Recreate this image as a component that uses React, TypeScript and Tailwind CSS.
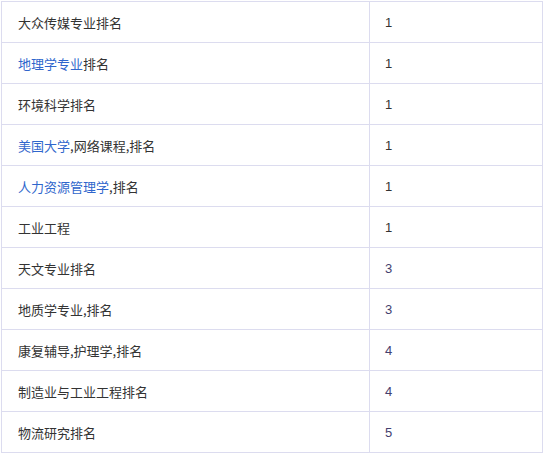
import React from "react";

type Part = { t: string; link?: boolean };
const rows: { name: Part[]; rank: string; alt?: boolean }[] = [
  { name: [{ t: "大众传媒专业排名" }], rank: "1" },
  { name: [{ t: "地理学专业", link: true }, { t: "排名" }], rank: "1" },
  { name: [{ t: "环境科学排名" }], rank: "1" },
  { name: [{ t: "美国大学", link: true }, { t: ",网络课程,排名" }], rank: "1" },
  { name: [{ t: "人力资源管理学", link: true }, { t: ",排名" }], rank: "1" },
  { name: [{ t: "工业工程" }], rank: "1" },
  { name: [{ t: "天文专业排名" }], rank: "3", alt: true },
  { name: [{ t: "地质学专业,排名" }], rank: "3", alt: true },
  { name: [{ t: "康复辅导,护理学,排名" }], rank: "4", alt: true },
  { name: [{ t: "制造业与工业工程排名" }], rank: "4", alt: true },
  { name: [{ t: "物流研究排名" }], rank: "5", alt: true },
];

export default function App() {
  return (
    <div className="bg-white w-[544px] h-[454px] pt-[1px] pl-[1px]">
      <div
        className="grid grid-cols-[368px_173px] w-[542px] border-l border-t border-[#dcdcef] text-[13px] text-[#333333]"
        style={{ fontFamily: '"Noto Sans CJK SC", "Noto Sans", sans-serif' }}
      >
        {rows.map((r, i) => (
          <React.Fragment key={i}>
            <div className="h-[41px] border-r border-b border-[#dcdcef] pl-[16px] pt-[2px] flex items-center">
              <span>
                {r.name.map((p, j) => (
                  <span key={j} className={p.link ? "text-[#2f66cc]" : ""}>
                    {p.t}
                  </span>
                ))}
              </span>
            </div>
            <div
              className={
                "h-[41px] border-r border-b border-[#dcdcef] pl-[15px] pt-[2px] flex items-center " +
                (r.alt ? "text-[#44406e]" : "text-[#333333]")
              }
              style={{ fontFamily: '"Liberation Sans", Arial, sans-serif' }}
            >
              {r.rank}
            </div>
          </React.Fragment>
        ))}
      </div>
    </div>
  );
}
